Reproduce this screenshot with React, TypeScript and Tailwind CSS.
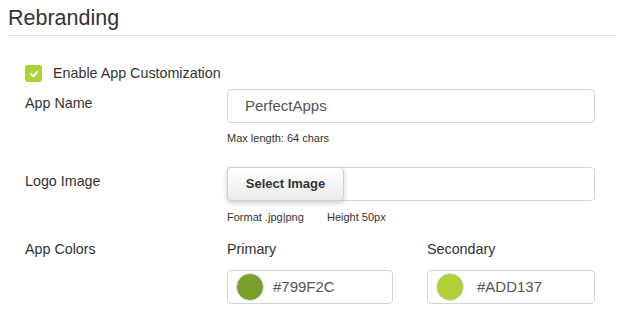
import React from 'react';

const font = { fontFamily: '"Liberation Sans", Arial, sans-serif' };

const ColorField = ({ label, hex, textGap }: { label: string; hex: string; textGap: string }) => {
  return (
    <div className="flex flex-col">
      <div className="h-[20px] text-[14.3px] leading-[20px] text-[#333]">{label}</div>
      <div className="mt-[11px] flex h-[34px] items-center rounded-[4px] border border-[#d4d4d4] bg-white pl-[8px]">
        <span
          className="h-[28px] w-[28px] shrink-0 rounded-full border border-[#e2e2e2]"
          style={{ backgroundColor: hex }}
        ></span>
        <span className={`text-[15px] text-[#555] ${textGap}`}>{hex}</span>
      </div>
    </div>
  );
};

const App = () => {
  return (
    <div className="h-[321px] w-[625px] overflow-hidden bg-white px-2" style={font}>
      <div className="border-b border-[#e3e3e3] pt-[5px] pb-[4px]">
        <h2 className="text-[21.5px] leading-[26px] text-[#333]">Rebranding</h2>
      </div>

      <div className="pl-[17px]">
        <div className="mt-[29px] flex h-[17px] items-center">
          <span className="flex h-[17px] w-[17px] items-center justify-center rounded-[3px] bg-[#ADD137]">
            <svg width="10" height="10" viewBox="0 0 10 10">
              <path d="M2 5.2 L4.2 7.3 L8 3" fill="none" stroke="white" strokeWidth="1.9" strokeLinecap="round" strokeLinejoin="round" />
            </svg>
          </span>
          <span className="ml-[11px] text-[14.3px] text-[#333]">Enable App Customization</span>
        </div>

        <div className="mt-[7px] flex">
          <div className="w-[202px] pt-[4px] text-[14.3px] leading-[20px] text-[#333]">App Name</div>
          <div className="w-[368px]">
            <div className="flex h-[34px] items-center rounded-[4px] border border-[#d4d4d4] pl-[17px] text-[15px] text-[#555]">
              PerfectApps
            </div>
            <div className="mt-[8px] text-[11px] leading-[15px] text-[#333]">Max length: 64 chars</div>
          </div>
        </div>

        <div className="mt-[21px] flex">
          <div className="w-[202px] pt-[4px] text-[14.3px] leading-[20px] text-[#333]">Logo Image</div>
          <div className="w-[368px]">
            <div className="flex h-[34px] rounded-[4px] border border-[#d4d4d4]">
              <button className="-m-px flex h-[34px] w-[117px] items-center justify-center rounded-[4px] border border-[#d0d0d0] bg-gradient-to-b from-white to-[#ececec] text-[13px] font-bold text-[#333] shadow-[0_2px_5px_rgba(0,0,0,0.2)]">
                Select Image
              </button>
            </div>
            <div className="mt-[9px] flex text-[11px] leading-[15px] text-[#333]">
              <span className="w-[100px]">Format .jpg|png</span>
              <span>Height 50px</span>
            </div>
          </div>
        </div>

        <div className="mt-[14px] flex">
          <div className="w-[202px] text-[14.3px] leading-[20px] text-[#333]">App Colors</div>
          <div className="flex w-[368px]">
            <div className="w-[166px]">
              <ColorField label="Primary" hex="#799F2C" textGap="ml-[9px]" />
            </div>
            <div className="ml-[34px] w-[168px]">
              <ColorField label="Secondary" hex="#ADD137" textGap="ml-[13px]" />
            </div>
          </div>
        </div>
      </div>
    </div>
  );
};

export default App;
